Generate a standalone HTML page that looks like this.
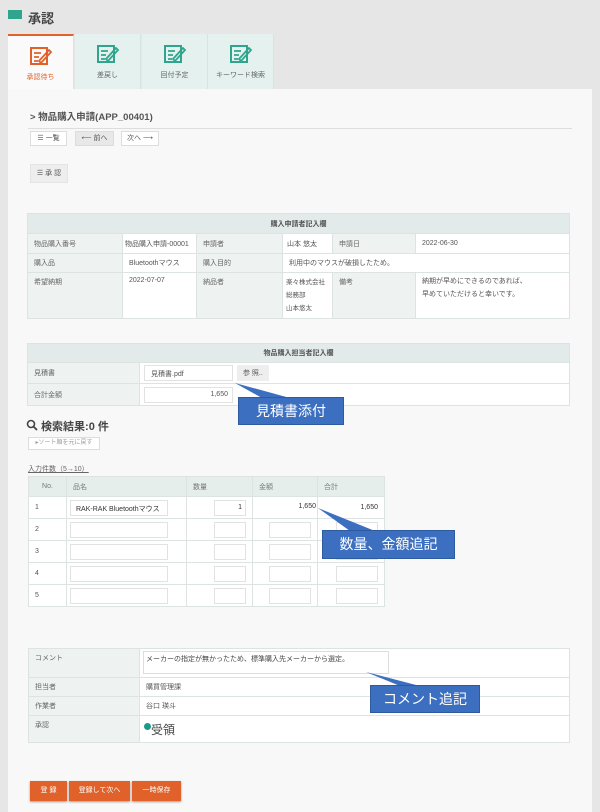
<!DOCTYPE html>
<html><head><meta charset="utf-8"><style>
*{margin:0;padding:0;box-sizing:border-box}
body{width:600px;height:812px;background:#e6e6e6;font-family:"Liberation Sans","Noto Sans CJK JP",sans-serif;color:#555;position:relative;overflow:hidden;font-size:7px}
.a{position:absolute}
.panel{left:8px;top:89px;width:584px;height:723px;background:#f8f8f8}
.tab{top:34px;height:55px;width:66px;background:#e4f1ef;border-right:1px solid #d6e4e2;text-align:center;font-size:7px;color:#666}
.tab svg{display:block;margin:10px auto 6px}
.btn{background:#fff;border:1px solid #ddd;font-size:7px;line-height:13px;text-align:center;color:#555}
table{border-collapse:collapse;position:absolute;font-size:7px;table-layout:fixed}
td{border:1px solid #dde3e2;padding:0 6px;vertical-align:middle;overflow:hidden;white-space:nowrap}
.l{background:#eef2f1;color:#666}
.v{background:#fff}
.h{background:#e2ebe9;text-align:center;font-weight:bold;color:#555}
.inp{background:#fff;border:1px solid #e2e2e2;height:16px;display:inline-block;vertical-align:middle}
.call{background:#3c6fc0;color:#fff;font-size:14px;text-align:center;border:1px solid #2e5aa0}
.ob{background:#e0622a;color:#fff;font-size:7px;text-align:center;line-height:20px;top:781px;height:20px;box-shadow:0 1px 2px #999}
</style></head><body>
<div class="a" style="left:8px;top:10px;width:14px;height:9px;background:#2fa58d"></div>
<div class="a" style="left:28px;top:8px;font-size:13px;font-weight:bold;color:#444">承認</div>
<div class="a panel"></div>
<div class="a tab" style="left:8px;background:#fafafa;border-top:2px solid #e0622a;color:#e0622a"><svg width="24" height="20" viewBox="0 0 24 20"><rect x="2" y="2" width="16" height="16" fill="none" stroke="#e0622a" stroke-width="2"/><path d="M5 7h7M5 11h5M5 15h4M10 15l10-11 2 2-10 11z" stroke="#e0622a" stroke-width="1.8" fill="none"/></svg>承認待ち</div>
<div class="a tab" style="left:75px"><svg width="24" height="20" viewBox="0 0 24 20"><rect x="2" y="2" width="16" height="16" fill="none" stroke="#2fa58d" stroke-width="2"/><path d="M5 7h7M5 11h5M5 15h4M10 15l10-11 2 2-10 11z" stroke="#2fa58d" stroke-width="1.8" fill="none"/></svg>差戻し</div>
<div class="a tab" style="left:142px"><svg width="24" height="20" viewBox="0 0 24 20"><rect x="2" y="2" width="16" height="16" fill="none" stroke="#2fa58d" stroke-width="2"/><path d="M5 7h7M5 11h5M5 15h4M10 15l10-11 2 2-10 11z" stroke="#2fa58d" stroke-width="1.8" fill="none"/></svg>回付予定</div>
<div class="a tab" style="left:208px"><svg width="24" height="20" viewBox="0 0 24 20"><rect x="2" y="2" width="16" height="16" fill="none" stroke="#2fa58d" stroke-width="2"/><path d="M5 7h7M5 11h5M5 15h4M10 15l10-11 2 2-10 11z" stroke="#2fa58d" stroke-width="1.8" fill="none"/></svg>キーワード検索</div>
<div class="a" style="left:30px;top:109px;font-size:9.5px;font-weight:bold;color:#555">&gt; 物品購入申請(APP_00401)</div>
<div class="a" style="left:28px;top:128px;width:544px;height:1px;background:#ddd"></div>
<div class="a btn" style="left:30px;top:131px;width:37px;height:15px">☰ 一覧</div>
<div class="a btn" style="left:75px;top:131px;width:39px;height:15px;background:#e8e8e8">⟵ 前へ</div>
<div class="a btn" style="left:121px;top:131px;width:38px;height:15px">次へ ⟶</div>
<div class="a btn" style="left:30px;top:164px;width:38px;height:19px;line-height:17px;background:#eee;border-color:#e4e4e4">☰ 承 認</div>

<table style="left:27px;top:213px;width:543px">
<colgroup><col style="width:95px"><col style="width:74px"><col style="width:86px"><col style="width:50px"><col style="width:83px"><col></colgroup>
<tr style="height:20px"><td class="h" colspan="6">購入申請者記入欄</td></tr>
<tr style="height:20px"><td class="l">物品購入番号</td><td class="v" style="padding:0 2px">物品購入申請-00001</td><td class="l">申請者</td><td class="v" style="padding:0 4px">山本 悠太</td><td class="l">申請日</td><td class="v">2022-06-30</td></tr>
<tr style="height:19px"><td class="l">購入品</td><td class="v">Bluetoothマウス</td><td class="l">購入目的</td><td class="v" colspan="3">利用中のマウスが破損したため。</td></tr>
<tr style="height:46px"><td class="l" style="vertical-align:top;padding-top:4px">希望納期</td><td class="v" style="vertical-align:top;padding-top:4px">2022-07-07</td><td class="l" style="vertical-align:top;padding-top:4px">納品者</td><td class="v" style="line-height:13px;padding:1px 3px;font-size:6.5px">楽々株式会社<br>総務部<br>山本悠太</td><td class="l" style="vertical-align:top;padding-top:4px">備考</td><td class="v" style="line-height:13px;vertical-align:top;padding-top:2px">納期が早めにできるのであれば、<br>早めていただけると幸いです。</td></tr>
</table>

<table style="left:27px;top:343px;width:543px">
<colgroup><col style="width:112px"><col></colgroup>
<tr style="height:19px"><td class="h" colspan="2">物品購入担当者記入欄</td></tr>
<tr style="height:21px"><td class="l">見積書</td><td class="v" style="padding:0 4px"><span class="inp" style="width:89px;padding:3px 6px">見積書.pdf</span> <span style="display:inline-block;background:#eee;padding:3px 6px;margin-left:2px">参 照..</span></td></tr>
<tr style="height:22px"><td class="l">合計金額</td><td class="v" style="padding:0 4px"><span class="inp" style="width:89px;padding:3px 4px;text-align:right">1,650</span></td></tr>
</table>

<div class="a" style="left:26px;top:418px;font-size:11px;font-weight:bold;color:#444"><svg width="12" height="12" viewBox="0 0 12 12" style="vertical-align:-1px"><circle cx="5" cy="5" r="3.5" fill="none" stroke="#444" stroke-width="1.6"/><path d="M7.5 7.5l3.5 3.5" stroke="#444" stroke-width="1.8"/></svg> 検索結果:0 件</div>
<div class="a btn" style="left:28px;top:437px;width:72px;height:13px;line-height:11px;font-size:6px;color:#999">▸ソート順を元に戻す</div>
<div class="a" style="left:28px;top:464px;font-size:7px;text-decoration:underline;color:#666">入力件数（5→10）</div>

<table style="left:28px;top:476px;width:357px">
<colgroup><col style="width:38px"><col style="width:120px"><col style="width:66px"><col style="width:65px"><col></colgroup>
<tr style="height:20px;background:#e6eeec;color:#777"><td style="text-align:center">No.</td><td>品名</td><td>数量</td><td>金額</td><td>合計</td></tr>
<tr style="height:22px;background:#fff"><td>1</td><td style="padding:0 3px"><span class="inp" style="width:98px;padding:3px 5px;color:#333">RAK-RAK Bluetoothマウス</span></td><td style="text-align:right"><span class="inp" style="width:32px;padding:3px 3px;color:#333">1</span></td><td style="text-align:right"><span class="inp" style="width:60px;padding:3px 3px;color:#333;border:none">1,650</span></td><td style="text-align:right;color:#333">1,650</td></tr>
<tr style="height:22px;background:#fff"><td>2</td><td style="padding:0 3px"><span class="inp" style="width:98px"></span></td><td style="text-align:right"><span class="inp" style="width:32px"></span></td><td style="text-align:right"><span class="inp" style="width:42px"></span></td><td style="text-align:right"><span class="inp" style="width:42px"></span></td></tr>
<tr style="height:22px;background:#fff"><td>3</td><td style="padding:0 3px"><span class="inp" style="width:98px"></span></td><td style="text-align:right"><span class="inp" style="width:32px"></span></td><td style="text-align:right"><span class="inp" style="width:42px"></span></td><td style="text-align:right"><span class="inp" style="width:42px"></span></td></tr>
<tr style="height:22px;background:#fff"><td>4</td><td style="padding:0 3px"><span class="inp" style="width:98px"></span></td><td style="text-align:right"><span class="inp" style="width:32px"></span></td><td style="text-align:right"><span class="inp" style="width:42px"></span></td><td style="text-align:right"><span class="inp" style="width:42px"></span></td></tr>
<tr style="height:22px;background:#fff"><td>5</td><td style="padding:0 3px"><span class="inp" style="width:98px"></span></td><td style="text-align:right"><span class="inp" style="width:32px"></span></td><td style="text-align:right"><span class="inp" style="width:42px"></span></td><td style="text-align:right"><span class="inp" style="width:42px"></span></td></tr>
</table>

<table style="left:28px;top:648px;width:542px">
<colgroup><col style="width:111px"><col></colgroup>
<tr style="height:29px"><td class="l" style="vertical-align:top;padding-top:4px">コメント</td><td class="v" style="padding:0 3px;vertical-align:top;padding-top:2px"><div style="width:246px;height:23px;border:1px solid #ddd;padding:2px;color:#444">メーカーの指定が無かったため、標準購入先メーカーから選定。</div></td></tr>
<tr style="height:19px"><td class="l">担当者</td><td class="v">購買管理課</td></tr>
<tr style="height:19px"><td class="l">作業者</td><td class="v">谷口 瑛斗</td></tr>
<tr style="height:27px"><td class="l" style="vertical-align:top;padding-top:4px">承認</td><td class="v" style="font-size:12px;color:#444;padding-left:4px"><span style="display:inline-block;width:7px;height:7px;border-radius:50%;background:#1a9a88;vertical-align:4px"></span>受領</td></tr>
</table>

<svg class="a" style="left:0;top:0" width="600" height="812">
<polygon points="235,383 262,398 290,398" fill="#3c6fc0"/>
<polygon points="318,508 350,531 375,531" fill="#3c6fc0"/>
<polygon points="366,672 400,686 420,686" fill="#3c6fc0"/>
</svg>
<div class="a call" style="left:238px;top:397px;width:106px;height:28px;line-height:26px">見積書添付</div>
<div class="a call" style="left:322px;top:530px;width:133px;height:29px;line-height:27px">数量、金額追記</div>
<div class="a call" style="left:370px;top:685px;width:110px;height:28px;line-height:26px">コメント追記</div>

<div class="a ob" style="left:30px;width:37px">登 録</div>
<div class="a ob" style="left:69px;width:61px">登録して次へ</div>
<div class="a ob" style="left:132px;width:49px">一時保存</div>
</body></html>
